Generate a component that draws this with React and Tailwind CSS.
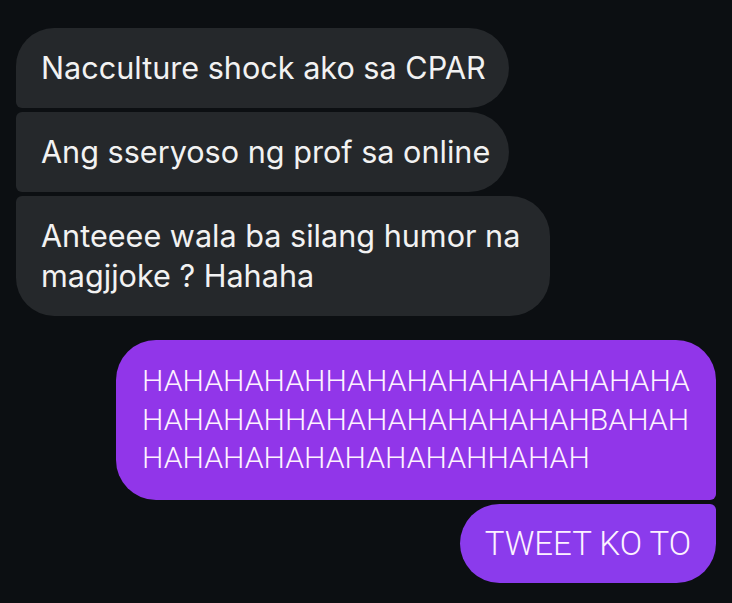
import React from "react";

const grey = [
  { text: ["Nacculture shock ako sa CPAR"], w: "w-[493px]", r: "rounded-tl-[38px] rounded-bl-[6px]" },
  { text: ["Ang sseryoso ng prof sa online"], w: "w-[493px]", r: "rounded-tl-[6px] rounded-bl-[6px]" },
  { text: ["Anteeee wala ba silang humor na", "magjjoke ? Hahaha"], w: "w-[534px]", r: "rounded-tl-[6px] rounded-bl-[38px]" },
];

const App = () => {
  return (
    <div className="w-[732px] h-[603px] overflow-hidden bg-[#0c0f12] flex flex-col pt-[28px] px-[16px]">
      {/* incoming */}
      <div className="flex flex-col gap-[4px] items-start">
        {grey.map((m, i) => (
          <div
            key={i}
            className={`${m.w} ${m.r} rounded-tr-[40px] rounded-br-[40px] bg-[#25282b] text-[#f2f2f2] px-[25px] py-[20px] text-[30.6px] leading-[40px] whitespace-nowrap font-['Inter',sans-serif]`}
          >
            {m.text.map((t, j) => (
              <div key={j}>{t}</div>
            ))}
          </div>
        ))}
      </div>

      {/* outgoing */}
      <div className="flex flex-col gap-[4px] items-end mt-[24px]">
        <div className="w-[600px] bg-[#9136e9] text-[#fdf2ff] rounded-tl-[40px] rounded-bl-[40px] rounded-tr-[40px] rounded-br-[6px] pl-[26px] pr-[10px] pt-[22px] pb-[22px] text-[30.2px] leading-[38.5px] whitespace-nowrap font-light font-['Roboto',sans-serif]">
          <div>HAHAHAHAHHAHAHAHAHAHAHAHAHA</div>
          <div>HAHAHAHHAHAHAHAHAHAHAHBAHAH</div>
          <div>HAHAHAHAHAHAHAHAHHAHAH</div>
        </div>
        <div className="w-fit bg-[#8b3bec] text-[#fdf2ff] rounded-tl-[40px] rounded-bl-[40px] rounded-tr-[6px] rounded-br-[40px] px-[25px] py-[20px] text-[33px] leading-[39px] whitespace-nowrap font-light font-['Roboto',sans-serif]">
          TWEET KO TO
        </div>
      </div>
    </div>
  );
};

export default App;
